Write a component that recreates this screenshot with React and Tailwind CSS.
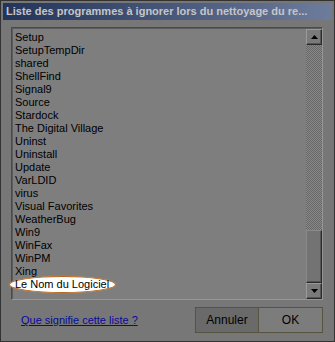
const items = [
  'Setup',
  'SetupTempDir',
  'shared',
  'ShellFind',
  'Signal9',
  'Source',
  'Stardock',
  'The Digital Village',
  'Uninst',
  'Uninstall',
  'Update',
  'VarLDID',
  'virus',
  'Visual Favorites',
  'WeatherBug',
  'Win9',
  'WinFax',
  'WinPM',
  'Xing',
]

function Arrow({ up }) {
  return (
    <svg width="7" height="4" viewBox="0 0 7 4">
      <path d={up ? 'M3.5 0 L7 4 L0 4 Z' : 'M0 0 L7 0 L3.5 4 Z'} fill="#000" />
    </svg>
  )
}

function ScrollButton({ up }) {
  return (
    <div className="w-[16px] h-[16px] flex items-center justify-center bg-[#7a7a7a] border-t border-l border-[#9a9a9a] border-r border-b border-r-[#2a2a2a] border-b-[#2a2a2a] shadow-[inset_-1px_-1px_0_#555]">
      <Arrow up={up} />
    </div>
  )
}

export default function App() {
  return (
    <div className="w-[335px] h-[342px] bg-[#777777] border border-[#333] flex flex-col font-['Liberation_Sans',Arial,sans-serif] relative">
      <div className="mx-[2px] mt-[2px] h-[17px] flex items-center px-[3px] bg-gradient-to-r from-[#23345a] to-[#6e7c9c] text-[#c6c6c6] text-[11px] font-bold whitespace-nowrap overflow-hidden">
        Liste des programmes à ignorer lors du nettoyage du re...
      </div>

      <div className="ml-[10px] mr-[11px] mt-[7px] h-[273px] flex border-t border-l border-[#4a4a4a] border-r border-b border-r-[#969696] border-b-[#969696]">
        <div className="flex-1 flex border-t border-l border-[#5c5c5c] bg-[#7e7e7e]">
          <div className="flex-1 pl-[2px] pt-[2px] text-[11px] leading-[13px] text-black">
            {items.map((name) => (
              <div key={name} className="h-[13px] whitespace-nowrap">{name}</div>
            ))}
            <div className="h-[13px] whitespace-nowrap relative">
              <span className="absolute left-[-6px] top-[-2px] w-[107px] h-[17px] rounded-[50%] bg-white border-[1.5px] border-[#b8661a] shadow-[0_0_1px_#e0a060]" />
              <span className="relative">Le Nom du Logiciel</span>
            </div>
          </div>
          <div className="w-[16px] flex flex-col">
            <ScrollButton up />
            <div className="flex-1 bg-[repeating-conic-gradient(#666_0_25%,#8a8a8a_0_50%)] bg-[length:2px_2px]" />
            <div className="h-[53px] bg-[#737373] border-t border-l border-[#8a8a8a] border-r border-b border-r-[#2a2a2a] border-b-[#2a2a2a] shadow-[inset_-1px_-1px_0_#555]" />
            <ScrollButton />
          </div>
        </div>
      </div>

      <div className="flex items-center mt-[7px] pl-[20px] pr-[11px]">
        <a href="#" className="text-[#0a0a9a] underline text-[11px] mt-[1px]">
          Que signifie cette liste ?
        </a>
        <div className="ml-auto flex h-[26px] border border-[#56543f]">
          <button className="w-[63px] bg-[#6a6a6a] text-[12px] text-black border-r border-[#56543f]">Annuler</button>
          <button className="w-[63px] bg-[#7c7c7c] text-[12px] text-black">OK</button>
        </div>
      </div>
    </div>
  )
}
